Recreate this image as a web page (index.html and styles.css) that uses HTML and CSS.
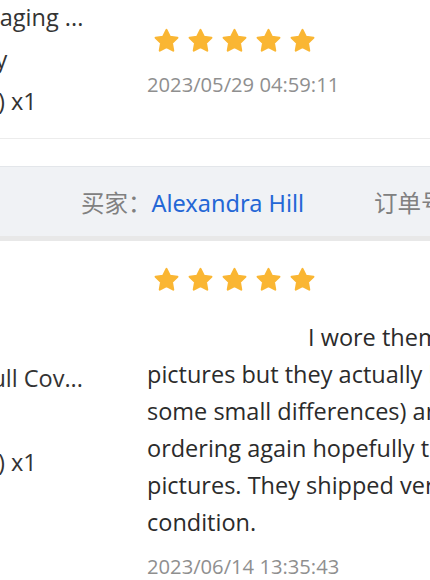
FILE: index.html
```html
<!DOCTYPE html>
<html lang="zh-CN">
<head>
    <meta charset="UTF-8">
    <meta name="viewport" content="width=device-width, initial-scale=1.0">
    <title>Order Reviews</title>
    <link rel="stylesheet" href="styles.css">
</head>
<body>
<div class="order-list">
    <div class="review-row first-row">
        <div class="product-cell">
            <p class="product-line">Packaging ...</p>
            <p class="product-line">Wavy</p>
            <p class="product-line">(M/L) x1</p>
        </div>
        <div class="review-cell">
            <div class="stars">
                <svg class="star" viewBox="0 0 24 24"><path d="M12 1.8L15.23 8.35 22.46 9.4 17.23 14.5 18.47 21.7 12 18.3 5.53 21.7 6.77 14.5 1.54 9.4 8.77 8.35Z"/></svg>
                <svg class="star" viewBox="0 0 24 24"><path d="M12 1.8L15.23 8.35 22.46 9.4 17.23 14.5 18.47 21.7 12 18.3 5.53 21.7 6.77 14.5 1.54 9.4 8.77 8.35Z"/></svg>
                <svg class="star" viewBox="0 0 24 24"><path d="M12 1.8L15.23 8.35 22.46 9.4 17.23 14.5 18.47 21.7 12 18.3 5.53 21.7 6.77 14.5 1.54 9.4 8.77 8.35Z"/></svg>
                <svg class="star" viewBox="0 0 24 24"><path d="M12 1.8L15.23 8.35 22.46 9.4 17.23 14.5 18.47 21.7 12 18.3 5.53 21.7 6.77 14.5 1.54 9.4 8.77 8.35Z"/></svg>
                <svg class="star" viewBox="0 0 24 24"><path d="M12 1.8L15.23 8.35 22.46 9.4 17.23 14.5 18.47 21.7 12 18.3 5.53 21.7 6.77 14.5 1.54 9.4 8.77 8.35Z"/></svg>
            </div>
            <p class="review-date">2023/05/29 04:59:11</p>
        </div>
    </div>

    <div class="buyer-bar">
        <span class="buyer">买家：<a class="buyer-name" href="#">Alexandra Hill</a></span>
        <span class="order-no">订单号：20230614083512</span>
    </div>

    <div class="review-row second-row">
        <div class="product-cell">
            <p class="product-line">Sc Full Cov...</p>
            <p class="product-line">Red</p>
            <p class="product-line">(M/L) x1</p>
        </div>
        <div class="review-cell">
            <div class="stars">
                <svg class="star" viewBox="0 0 24 24"><path d="M12 1.8L15.23 8.35 22.46 9.4 17.23 14.5 18.47 21.7 12 18.3 5.53 21.7 6.77 14.5 1.54 9.4 8.77 8.35Z"/></svg>
                <svg class="star" viewBox="0 0 24 24"><path d="M12 1.8L15.23 8.35 22.46 9.4 17.23 14.5 18.47 21.7 12 18.3 5.53 21.7 6.77 14.5 1.54 9.4 8.77 8.35Z"/></svg>
                <svg class="star" viewBox="0 0 24 24"><path d="M12 1.8L15.23 8.35 22.46 9.4 17.23 14.5 18.47 21.7 12 18.3 5.53 21.7 6.77 14.5 1.54 9.4 8.77 8.35Z"/></svg>
                <svg class="star" viewBox="0 0 24 24"><path d="M12 1.8L15.23 8.35 22.46 9.4 17.23 14.5 18.47 21.7 12 18.3 5.53 21.7 6.77 14.5 1.54 9.4 8.77 8.35Z"/></svg>
                <svg class="star" viewBox="0 0 24 24"><path d="M12 1.8L15.23 8.35 22.46 9.4 17.23 14.5 18.47 21.7 12 18.3 5.53 21.7 6.77 14.5 1.54 9.4 8.77 8.35Z"/></svg>
            </div>
            <p class="review-text">
                I wore them once and they look just like the<br>
                pictures but they actually look even better (there are<br>
                some small differences) and I will definitely be<br>
                ordering again hopefully they look like the<br>
                pictures. They shipped very fast and arrived in perfect<br>
                condition.
            </p>
            <p class="review-date">2023/06/14 13:35:43</p>
        </div>
    </div>
</div>
</body>
</html>
```

FILE: styles.css
```css
body {
    margin: 0;
    background: #fff;
    color: #333;
    font-family: "Open Sans", "Noto Sans CJK SC", sans-serif;
    overflow: hidden;
}
p {
    margin: 0;
}
.order-list {
    width: 1000px;
    margin: -20px 0 0 -51px;
}
.review-row {
    display: flex;
    border-bottom: 1px solid #ececec;
}
.second-row {
    border-bottom: none;
}
.product-cell {
    width: 198px;
    flex-shrink: 0;
    align-self: center;
    font-size: 23.5px;
    line-height: 42px;
    white-space: nowrap;
    color: #333;
}
.review-cell {
    flex: 1;
}
.first-row .review-cell {
    padding: 48px 0 39px;
}
.second-row .review-cell {
    padding: 26px 0 18px;
}
.stars {
    display: flex;
    gap: 9px;
    margin-left: 7px;
}
.star {
    width: 25px;
    height: 25px;
    fill: #fab633;
    stroke: #fab633;
    stroke-width: 2;
    stroke-linejoin: round;
}
.review-date {
    margin-top: 16px;
    font-size: 20.2px;
    line-height: 30px;
    color: #8f8f8f;
    white-space: nowrap;
}
.review-text {
    margin-top: 27px;
    font-size: 23.5px;
    line-height: 37px;
    color: #2b2b2b;
    text-indent: 161px;
    white-space: nowrap;
}
.review-text + .review-date {
    margin-top: 10px;
}
.buyer-bar {
    display: flex;
    align-items: center;
    height: 69px;
    margin-top: 27px;
    padding-left: 132px;
    background: #f0f2f5;
    border-top: 1px solid #e3e6ea;
    border-bottom: 5px solid #e8e8e8;
    font-family: "Noto Sans", "Noto Sans CJK SC", sans-serif;
    font-size: 23.5px;
    color: #808080;
    white-space: nowrap;
}
.buyer-name {
    color: #2467d6;
    text-decoration: none;
}
.order-no {
    margin-left: 70px;
}
```
